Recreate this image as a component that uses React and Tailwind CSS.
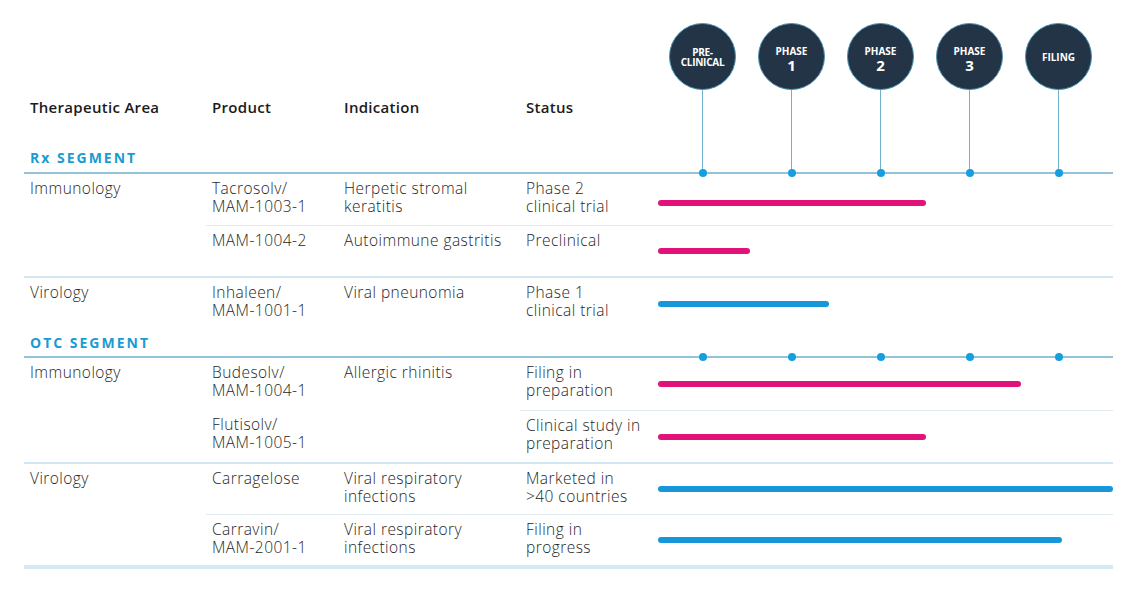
import React from "react";

const font = { fontFamily: '"Open Sans", "Noto Sans", Arial, sans-serif' };

const PINK = "bg-[#e1127a]";
const BLUE = "bg-[#1597d9]";

function Cell({ children, className = "" }) {
  return (
    <div className={"pl-[6px] pt-[5px] text-[15.5px] leading-[18px] tracking-[0.45px] font-light text-[#262626] " + className}>
      {children}
    </div>
  );
}

function Bar({ width, color, className = "" }) {
  return (
    <div className={"pl-[6px] flex items-center " + className}>
      <div className={"h-[6px] rounded-full " + color} style={{ width }} />
    </div>
  );
}

function Circle({ children }) {
  return (
    <div className="w-[67px] h-[67px] rounded-full bg-[#243447] border-[1.5px] border-[#4b93b3] flex flex-col items-center justify-center text-white font-bold text-center">
      {children}
    </div>
  );
}

function SegmentLine() {
  return (
    <div className="h-[2px] bg-[#93c3d9] flex items-center pl-[634px]">
      {[0, 1, 2, 3, 4].map((i) => (
        <div key={i} className="w-[89px] flex justify-center">
          <div className="w-[8px] h-[8px] rounded-full bg-[#169fde]" />
        </div>
      ))}
    </div>
  );
}

const cols = "grid grid-cols-[182px_132px_182px_132px_461px]";
const thin = "border-t border-[#dfeaf1]";

function PhaseLabel({ n }) {
  return (
    <div className="pt-[5px] flex flex-col items-center">
      <div className="text-[10px] leading-[12px]">PHASE</div>
      <div className="text-[15px] leading-[17px]">{n}</div>
    </div>
  );
}

export default function App() {
  const circles = [
    <div className="flex flex-col items-center text-[10px] leading-[10px] tracking-tight">
      <div>PRE-</div>
      <div>CLINICAL</div>
    </div>,
    <PhaseLabel n="1" />,
    <PhaseLabel n="2" />,
    <PhaseLabel n="3" />,
    <div className="text-[10px] leading-[12px] pt-[1px]">FILING</div>,
  ];

  return (
    <div className="w-[1136px] h-[601px] bg-white" style={font}>
      <div className="ml-[24px] w-[1089px]">
        {/* Top header */}
        <div className="flex h-[172px]">
          <div className="w-[628px] flex flex-col pt-[98px]">
            <div className="grid grid-cols-[182px_132px_182px_132px] text-[15px] leading-[18px] tracking-[0.3px] font-semibold text-[#1b1b1b]">
              <div className="pl-[6px]">Therapeutic Area</div>
              <div className="pl-[6px]">Product</div>
              <div className="pl-[6px]">Indication</div>
              <div className="pl-[6px]">Status</div>
            </div>
            <div className="mt-[33px] pl-[6px] text-[14px] leading-[18px] font-bold tracking-[2px] text-[#1a9bd2]">
              Rx SEGMENT
            </div>
          </div>
          <div className="w-[461px] pl-[6px] flex">
            {circles.map((c, i) => (
              <div key={i} className="w-[89px] flex flex-col items-center pt-[23px]">
                <Circle>{c}</Circle>
                <div className="flex-1 w-[1.5px] bg-[#6fb2d0]" />
              </div>
            ))}
          </div>
        </div>
        <SegmentLine />

        {/* Rx Immunology */}
        <div className={cols + " grid-rows-[51px_51px] border-b-2 border-[#d2e6f1]"}>
          <Cell className="row-span-2">Immunology</Cell>
          <Cell>Tacrosolv/<br />MAM-1003-1</Cell>
          <Cell>Herpetic stromal<br />keratitis</Cell>
          <Cell>Phase 2<br />clinical trial</Cell>
          <Bar width={268} color={PINK} className="pt-[7px]" />
          <Cell className={thin}>MAM-1004-2</Cell>
          <Cell className={thin}>Autoimmune gastritis</Cell>
          <Cell className={thin}>Preclinical</Cell>
          <Bar width={92} color={PINK} className={thin} />
        </div>

        {/* Rx Virology */}
        <div className={cols + " grid-rows-[51px]"}>
          <Cell>Virology</Cell>
          <Cell>Inhaleen/<br />MAM-1001-1</Cell>
          <Cell>Viral pneunomia</Cell>
          <Cell>Phase 1<br />clinical trial</Cell>
          <Bar width={171} color={BLUE} />
        </div>

        <div className="h-[27px] pt-[5px] pl-[6px] text-[14px] leading-[18px] font-bold tracking-[2px] text-[#1a9bd2]">
          OTC SEGMENT
        </div>
        <SegmentLine />

        {/* OTC Immunology */}
        <div className={cols + " grid-rows-[52px_52px] border-b-2 border-[#d2e6f1]"}>
          <Cell className="row-span-2">Immunology</Cell>
          <Cell>Budesolv/<br />MAM-1004-1</Cell>
          <Cell className="row-span-2">Allergic rhinitis</Cell>
          <Cell>Filing in<br />preparation</Cell>
          <Bar width={363} color={PINK} />
          <Cell>Flutisolv/<br />MAM-1005-1</Cell>
          <Cell className={thin}>Clinical study in<br />preparation</Cell>
          <Bar width={268} color={PINK} className={thin} />
        </div>

        {/* OTC Virology */}
        <div className={cols + " grid-rows-[50px_51px] border-b-4 border-[#d6eaf5]"}>
          <Cell className="row-span-2">Virology</Cell>
          <Cell>Carragelose</Cell>
          <Cell>Viral respiratory<br />infections</Cell>
          <Cell>Marketed in<br />&gt;40 countries</Cell>
          <Bar width={455} color={BLUE} />
          <Cell className={thin}>Carravin/<br />MAM-2001-1</Cell>
          <Cell className={thin}>Viral respiratory<br />infections</Cell>
          <Cell className={thin}>Filing in<br />progress</Cell>
          <Bar width={404} color={BLUE} className={thin} />
        </div>
      </div>
    </div>
  );
}
